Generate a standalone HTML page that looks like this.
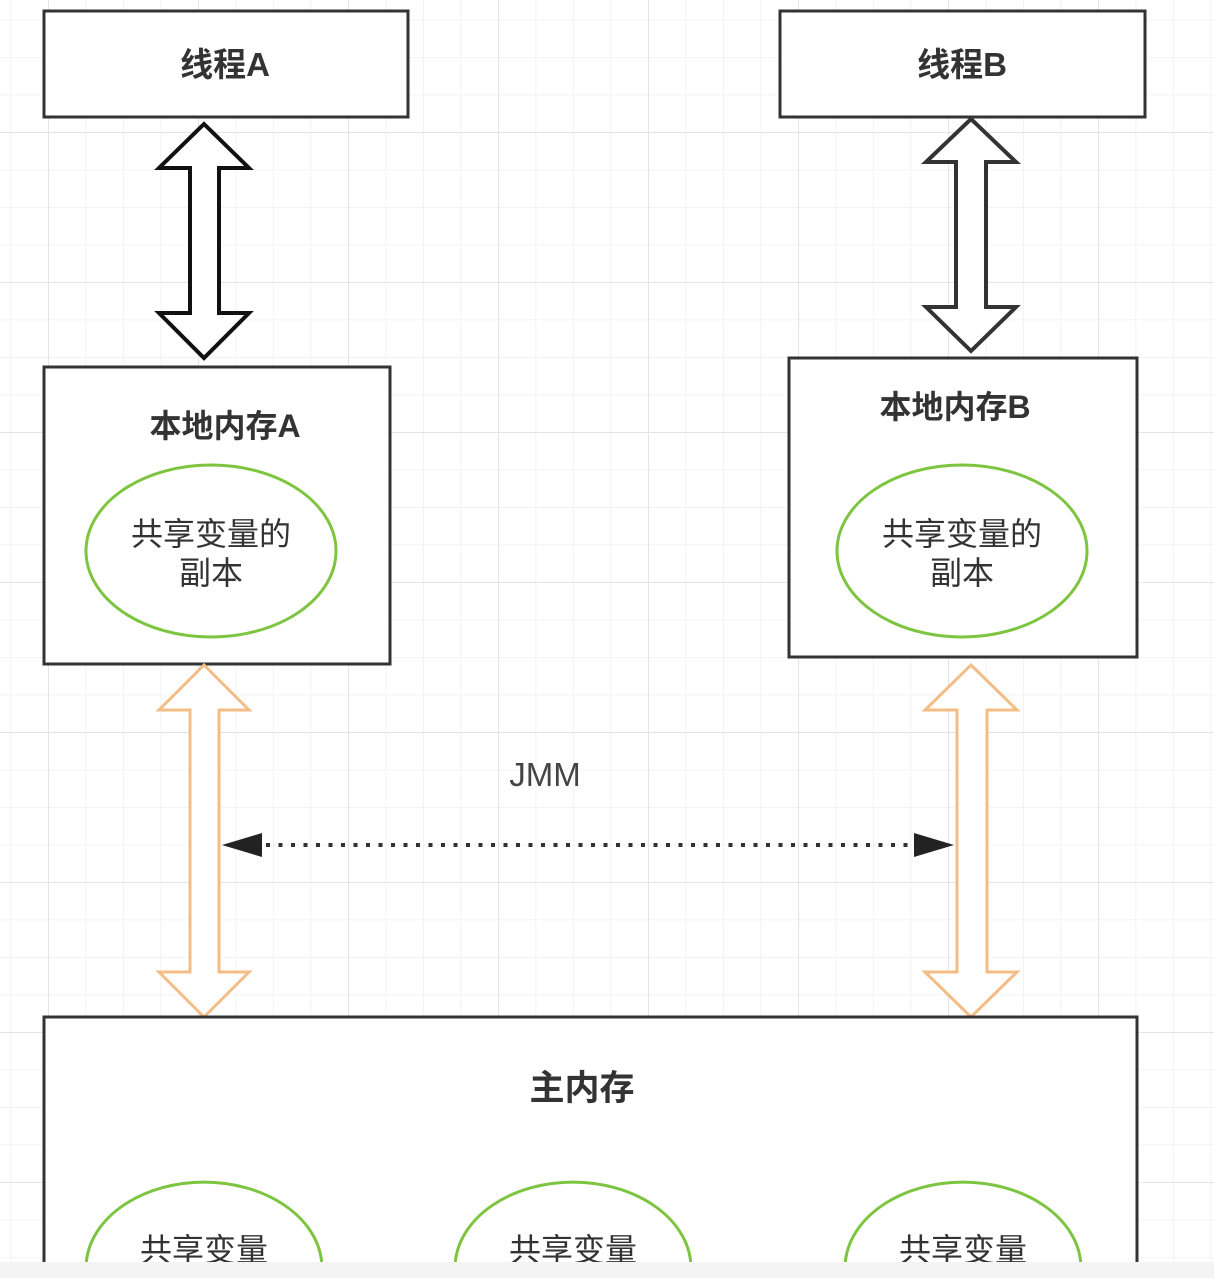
<!DOCTYPE html>
<html><head><meta charset="utf-8"><style>
html,body{margin:0;padding:0;background:#fff;width:1214px;height:1278px;overflow:hidden;}
svg{display:block;}
text{font-family:"Liberation Sans","Noto Sans CJK SC",sans-serif;fill:#333;}
</style></head><body>
<svg width="1214" height="1278" viewBox="0 0 1214 1278" xmlns="http://www.w3.org/2000/svg">
<defs>
<pattern id="minor" x="10.5" y="19.5" width="37.5" height="37.5" patternUnits="userSpaceOnUse">
<path d="M0 0H37.5M0 0V37.5" stroke="#efefef" stroke-width="1.5" fill="none"/>
</pattern>
<pattern id="major" x="48" y="-18" width="150" height="150" patternUnits="userSpaceOnUse">
<path d="M0 0H150M0 0V150" stroke="#e4e4e4" stroke-width="2" fill="none"/>
</pattern>
</defs>
<rect width="1214" height="1278" fill="#fff"/>
<rect width="1214" height="1278" fill="url(#minor)"/>
<rect width="1214" height="1278" fill="url(#major)"/>

<rect x="44" y="11" width="364" height="106" fill="#fff" stroke="#333" stroke-width="3"/>
<text x="225" y="76" font-size="33" font-weight="bold" text-anchor="middle">线程A</text>
<rect x="780" y="11" width="365" height="106" fill="#fff" stroke="#333" stroke-width="3"/>
<text x="962" y="76" font-size="33" font-weight="bold" text-anchor="middle">线程B</text>

<path d="M204 124 L249 168 L219 168 L219 313 L249 313 L204 358 L159 313 L190 313 L190 168 L159 168 Z" fill="#fff" stroke="#111" stroke-width="4"/>
<path d="M971 119 L1016 162 L986 162 L986 307 L1016 307 L971 351 L926 307 L956 307 L956 162 L926 162 Z" fill="#fff" stroke="#333" stroke-width="4"/>

<rect x="44" y="367" width="346" height="297" fill="#fff" stroke="#333" stroke-width="3"/>
<text x="225" y="437" font-size="32" font-weight="bold" text-anchor="middle">本地内存A</text>
<ellipse cx="211" cy="551" rx="125" ry="86" fill="#fff" stroke="#7dc540" stroke-width="3"/>
<text x="211" y="545" font-size="32" text-anchor="middle">共享变量的</text>
<text x="211" y="584" font-size="32" text-anchor="middle">副本</text>

<rect x="789" y="358" width="348" height="299" fill="#fff" stroke="#333" stroke-width="3"/>
<text x="955" y="418" font-size="32" font-weight="bold" text-anchor="middle">本地内存B</text>
<ellipse cx="962" cy="551" rx="125" ry="86" fill="#fff" stroke="#7dc540" stroke-width="3"/>
<text x="962" y="545" font-size="32" text-anchor="middle">共享变量的</text>
<text x="962" y="584" font-size="32" text-anchor="middle">副本</text>

<path d="M204 665 L249 710 L219 710 L219 972 L249 972 L204 1017 L159 972 L190 972 L190 710 L159 710 Z" fill="#fff" stroke="#f5bd86" stroke-width="3"/>
<path d="M971 665 L1017 710 L987 710 L987 972 L1017 972 L971 1017 L925 972 L957 972 L957 710 L925 710 Z" fill="#fff" stroke="#f5bd86" stroke-width="3"/>

<text x="545" y="786" font-size="33" text-anchor="middle" style="fill:#444">JMM</text>
<line x1="266" y1="845" x2="912" y2="845" stroke="#333" stroke-width="4" stroke-dasharray="4 8.5"/>
<path d="M222 845 L262 833 L262 857 Z" fill="#222"/>
<path d="M954 845 L914 833 L914 857 Z" fill="#222"/>

<path d="M44 1262 V1017 H1137 V1262 Z" fill="#fff" stroke="none"/>
<path d="M44 1262 V1017 H1137 V1262" fill="none" stroke="#333" stroke-width="3"/>
<text x="582" y="1100" font-size="35" font-weight="bold" text-anchor="middle">主内存</text>
<path d="M86.3 1262 A118 86 0 0 1 321.7 1262" fill="#fff" stroke="#7dc540" stroke-width="3"/>
<path d="M455.3 1262 A118 86 0 0 1 690.7 1262" fill="#fff" stroke="#7dc540" stroke-width="3"/>
<path d="M845.3 1262 A118 86 0 0 1 1080.7 1262" fill="#fff" stroke="#7dc540" stroke-width="3"/>
<text x="204" y="1261" font-size="32" text-anchor="middle">共享变量</text>
<text x="573" y="1261" font-size="32" text-anchor="middle">共享变量</text>
<text x="963" y="1261" font-size="32" text-anchor="middle">共享变量</text>

<rect x="0" y="1262" width="1214" height="16" fill="#f4f4f4"/>
</svg>
</body></html>
